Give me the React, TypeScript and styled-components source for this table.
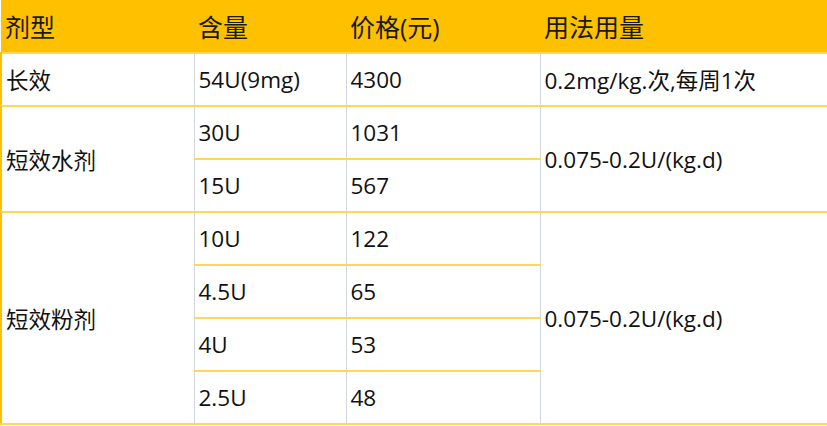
import styled, { createGlobalStyle } from 'styled-components'

const GlobalStyle = createGlobalStyle`
    html, body {
        margin: 0;
        padding: 0;
        background: #ffffff;
    }
    body {
        font-family: "Open Sans", "Noto Sans CJK SC", sans-serif;
        color: #111111;
    }
`

const Table = styled.table`
    width: 827px;
    border-collapse: collapse;
    table-layout: fixed;
`

const HeadRow = styled.tr`
    height: 53px;
    background: #ffc000;
`

const HeadCell = styled.th`
    padding: 0 4px;
    text-align: left;
    font-weight: normal;
    font-size: 25px;
    color: #1a1a1a;
    border: none;
`

const Row = styled.tr`
    height: 53px;
`

const Cell = styled.td<{ $first?: boolean; $last?: boolean }>`
    padding: 0 4px;
    font-size: 22.5px;
    white-space: nowrap;
    border-top: 2px solid #ffd659;
    border-bottom: 2px solid #ffd659;
    border-left: ${(p) => (p.$first ? '2px solid #ffc000' : '1px solid #d2d6de')};
    border-right: ${(p) => (p.$last ? '2px solid #ffc000' : '1px solid #d2d6de')};
    vertical-align: middle;
`

interface Group {
    type: string
    usage: string
    items: { dose: string; price: string }[]
}

const groups: Group[] = [
    {
        type: '长效',
        usage: '0.2mg/kg.次,每周1次',
        items: [{ dose: '54U(9mg)', price: '4300' }],
    },
    {
        type: '短效水剂',
        usage: '0.075-0.2U/(kg.d)',
        items: [
            { dose: '30U', price: '1031' },
            { dose: '15U', price: '567' },
        ],
    },
    {
        type: '短效粉剂',
        usage: '0.075-0.2U/(kg.d)',
        items: [
            { dose: '10U', price: '122' },
            { dose: '4.5U', price: '65' },
            { dose: '4U', price: '53' },
            { dose: '2.5U', price: '48' },
        ],
    },
]

export default function App() {
    return (
        <>
            <GlobalStyle />
            <Table>
                <colgroup>
                    <col style={{ width: 193 }} />
                    <col style={{ width: 152 }} />
                    <col style={{ width: 194 }} />
                    <col style={{ width: 288 }} />
                </colgroup>
                <thead>
                    <HeadRow>
                        <HeadCell>剂型</HeadCell>
                        <HeadCell>含量</HeadCell>
                        <HeadCell>价格(元)</HeadCell>
                        <HeadCell>用法用量</HeadCell>
                    </HeadRow>
                </thead>
                <tbody>
                    {groups.map((g) =>
                        g.items.map((it, i) => (
                            <Row key={g.type + it.dose}>
                                {i === 0 && (
                                    <Cell $first rowSpan={g.items.length}>
                                        {g.type}
                                    </Cell>
                                )}
                                <Cell>{it.dose}</Cell>
                                <Cell>{it.price}</Cell>
                                {i === 0 && (
                                    <Cell $last rowSpan={g.items.length}>
                                        {g.usage}
                                    </Cell>
                                )}
                            </Row>
                        ))
                    )}
                </tbody>
            </Table>
        </>
    )
}
